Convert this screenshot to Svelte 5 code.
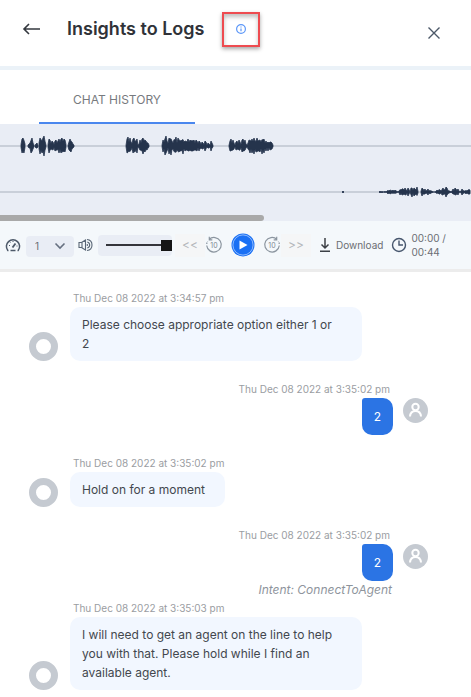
<script>
  const messages = [
    { from: 'bot', time: 'Thu Dec 08 2022 at 3:34:57 pm', text: 'Please choose appropriate option either 1 or 2' },
    { from: 'user', time: 'Thu Dec 08 2022 at 3:35:02 pm', text: '2' },
    { from: 'bot', time: 'Thu Dec 08 2022 at 3:35:02 pm', text: 'Hold on for a moment' },
    { from: 'user', time: 'Thu Dec 08 2022 at 3:35:02 pm', text: '2', intent: 'Intent: ConnectToAgent' },
    {
      from: 'bot',
      time: 'Thu Dec 08 2022 at 3:35:03 pm',
      text: 'I will need to get an agent on the line to help you with that. Please hold while I find an available agent.'
    }
  ];

  // Bursts of speech: start position and amplitude per pixel.
  const customer = [
    [21, [2, 7, 8, 7, 2]],
    [28, [1, 2, 3, 7, 8, 3, 1]],
    [35, [1, 2, 3, 1]],
    [39, [4, 8, 6, 7, 8, 10, 6, 1]],
    [48, [2, 7, 6, 3, 5, 4, 2, 5, 6, 4, 5, 7, 5, 7, 8, 6, 7, 6, 2]],
    [68, [1, 4, 7, 6, 4, 2, 1]],
    [126, [1, 7, 9, 5, 8, 4, 3, 7, 8, 6, 5, 7, 1, 2, 6, 4, 7, 8, 7, 6, 5, 4, 3, 1]],
    [162, [1, 6, 4, 9, 10, 5, 3, 8, 7, 9, 5, 3, 8, 6, 9, 4, 8, 6, 7, 5, 6, 8, 4, 5, 6, 4, 7, 5, 6, 5, 7, 5, 6, 4, 6, 5, 3, 5, 4, 2, 4, 3, 2, 5, 4, 1, 3, 2, 1, 5, 3, 1]],
    [229, [1, 5, 7, 4, 6, 3, 1, 4, 5, 3, 6, 4, 2, 6, 7, 5, 6, 2, 1, 3, 6, 7, 5, 7, 6, 8, 5, 6, 8, 5, 7, 6, 4, 8, 6, 7, 4, 5, 3, 5, 3, 4, 5, 3, 1]]
  ];
  const agent = [
    [342, [0, 1, 0]],
    [379, [0, 1, 0, 1, 0, 0, 1, 0, 1, 2, 1, 2, 2, 1, 2, 1, 2, 1, 1, 0, 1, 3, 2, 3, 4, 2, 4, 3, 1, 4, 3, 0, 4, 5, 2, 4, 4, 2, 5, 1]],
    [421, [1, 4, 3, 2, 3, 1, 2, 3, 1, 2, 1, 1, 0, 0, 0, 1, 2, 1, 3, 2, 1, 3, 4, 2, 3, 5, 4, 2, 1, 1, 0, 1, 3, 2, 4, 3, 2, 3, 1, 0, 1, 3, 2, 1, 1, 2, 1, 2, 3, 2]]
  ];

  function shape([start, amps], mid) {
    const top = amps.map((a, i) => `${start + i},${mid - a * (i % 3 ? 1 : 0.8)}`);
    const bottom = amps.map((a, i) => `${start + i},${mid + a * (i % 2 ? 1 : 0.7)}`).reverse();
    return [...top, ...bottom].join(' ');
  }

  let speed = $state('1');
  let volume = $state(100);
</script>

<main>
  <header>
    <button class="plain back" aria-label="Back">
      <svg width="20" height="16" viewBox="0 0 20 16" fill="none" stroke="#34383f" stroke-width="1.6">
        <path d="M19 8H3M8 3 3 8l5 5" />
      </svg>
    </button>
    <h1>Insights to Logs</h1>
    <button class="info" aria-label="Information">
      <svg width="12" height="12" viewBox="0 0 12 12" fill="none" stroke="#5c97f8" stroke-width="1.2">
        <circle cx="6" cy="6" r="4.4" />
        <path d="M6 5.5v2.8M6 3.4v1.2" />
      </svg>
    </button>
    <button class="plain close" aria-label="Close">
      <svg width="14" height="14" viewBox="0 0 14 14" fill="none" stroke="#4c5868" stroke-width="1.4">
        <path d="m1.5 1.5 11 11M12.5 1.5l-11 11" />
      </svg>
    </button>
  </header>

  <nav>
    <button class="tab">CHAT HISTORY</button>
  </nav>

  <section class="wave" aria-label="Recording">
    <svg width="100%" height="91" fill="#25344c">
      <line x1="0" x2="100%" y1="22" y2="22" stroke="#c9cfd9" stroke-width="2" />
      <line x1="0" x2="100%" y1="68" y2="68" stroke="#c9cfd9" stroke-width="2" />
      {#each customer as burst}<polygon points={shape(burst, 22)} stroke="#25344c" stroke-width="0.8" />{/each}
      {#each agent as burst}<polygon points={shape(burst, 68)} stroke="#25344c" stroke-width="0.8" />{/each}
    </svg>
    <div class="scroll"></div>
  </section>

  <section class="controls" aria-label="Player">
    <svg class="gauge" width="16" height="16" viewBox="0 0 16 16" fill="none" stroke="#4d5969" stroke-width="1.5">
      <path d="M3.5 13.5H2.8A6.600 6.600 0 1 1 13.2 13.5H12.5M5.5 13.5h5" />
      <path d="m7.5 10.5 3-4" stroke-width="1.8" />
      <path d="M4 8.5h1M5.2 5.4l.6.6M8 4v1M11.5 9h1" stroke-width="1" />
    </svg>
    <span class="speed">
      <select bind:value={speed} aria-label="Playback speed">
        <option>1</option>
        <option>2</option>
      </select>
      <svg width="12" height="8" viewBox="0 0 12 8" fill="none" stroke="#667080" stroke-width="1.6">
        <path d="m1.5 1.5 4.5 4.5 4.5-4.5" />
      </svg>
    </span>
    <svg class="speaker" width="15" height="14" viewBox="0 0 15 14" fill="none" stroke="#596676" stroke-width="1.1">
      <path d="M1 4.500h2.500L7.500 2v10L3.500 9.500H1zM4 4.500v5" />
      <path d="M9 1.500c3 .3 5 2.500 5 5.500s-2 5.200-5 5.500M9.300 4c1.500.4 2.400 1.500 2.400 3s-.9 2.600-2.400 3M9.300 6v2" />
    </svg>
    <span class="volume"><input type="range" min="0" max="100" bind:value={volume} aria-label="Volume" /></span>
    <button class="skip">&lt;&lt;</button>
    <button class="plain" aria-label="Back 10 seconds">
      <svg width="18" height="18" viewBox="0 0 18 18" fill="none" stroke="#8b959f" stroke-width="1.2">
        <path d="M4 3.400A7.300 7.300 0 1 1 1.700 9.500M4.300 .8v3h3" />
        <path d="M1.700 8q.2-1.500 1-2.700" stroke-dasharray="1.5 1" />
        <text x="9" y="11.5">10</text>
      </svg>
    </button>
    <button class="plain play" aria-label="Play">
      <svg width="24" height="24" viewBox="0 0 24 24">
        <circle cx="12" cy="12" r="11.5" fill="#1a70f4" />
        <circle cx="12" cy="12" r="10.1" fill="none" stroke="#9bc3ff" stroke-width=".9" />
        <path d="M8.500 7.500v9l8-4.500z" fill="#fff" />
      </svg>
    </button>
    <button class="plain" aria-label="Forward 10 seconds">
      <svg width="18" height="18" viewBox="0 0 18 18" fill="none" stroke="#8b959f" stroke-width="1.2">
        <path d="M14 3.400A7.300 7.300 0 1 0 16.300 9.500M13.700 .8v3h-3" />
        <path d="M16.300 8q-.2-1.500-1-2.700" stroke-dasharray="1.5 1" />
        <text x="9" y="11.5">10</text>
      </svg>
    </button>
    <button class="skip">&gt;&gt;</button>
    <button class="plain download">
      <svg width="12" height="16" viewBox="0 0 12 16" fill="none" stroke="#3c4046" stroke-width="1.5">
        <path d="M6 1v10M2.500 7.500 6 11l3.500-3.500M1 14.300h10" />
      </svg>
      Download
    </button>
    <svg class="clock" width="16" height="16" viewBox="0 0 16 16" fill="none" stroke="#46566d" stroke-width="1.4">
      <circle cx="8" cy="8" r="6.5" />
      <path d="M8 3.500V8h4" />
    </svg>
    <span class="elapsed">00:00 / 00:44</span>
  </section>

  <ol>
    {#each messages as m}
      <li class={m.from} class:tagged={m.intent}>
        <time>{m.time}</time>
        <div class="row">
          {#if m.from === 'bot'}<span class="ring"></span>{/if}
          <p>{m.text}</p>
          {#if m.from === 'user'}
            <svg width="25" height="25" viewBox="0 0 25 25" fill="none" stroke="#fff" stroke-width="2">
              <circle cx="12.5" cy="12.5" r="12.5" fill="#c5cad1" stroke="none" />
              <circle cx="12.5" cy="9" r="3.2" />
              <path d="M7 18.500c.3-3.500 2.300-5.500 5.500-5.500s5.200 2 5.500 5.500" />
            </svg>
          {/if}
        </div>
        {#if m.intent}<em>{m.intent}</em>{/if}
      </li>
    {/each}
  </ol>
</main>

<style>
  :global(body) {
    background: #fff;
  }
  main {
    font-family: Inter, 'Liberation Sans', sans-serif;
    color: #43474e;
  }
  button,
  select {
    font: inherit;
    color: inherit;
    border: 0;
    padding: 0;
    margin: 0;
  }
  svg {
    display: block;
    flex: none;
  }
  .plain {
    display: flex;
    align-items: center;
    background: none;
  }
  header {
    display: flex;
    align-items: center;
    box-sizing: border-box;
    height: 70px;
    padding: 0 30px 8px 21px;
    border-bottom: 4px solid #ebf2f8;
  }
  h1 {
    margin: 0 18px 0 26px;
    font-size: 18px;
    line-height: 24px;
    font-weight: 600;
    color: #303238;
    white-space: nowrap;
  }
  .info {
    display: flex;
    align-items: center;
    justify-content: center;
    width: 38px;
    height: 35px;
    background: #fff;
    border: 2px solid #ee4b50;
    box-shadow: 0 2px 4px rgb(0 0 0 / 35%), inset 0 3px 4px rgb(0 0 0 / 25%);
  }
  .close {
    margin: 8px 0 0 auto;
  }
  nav {
    padding-left: 39px;
  }
  .tab {
    width: 156px;
    height: 54px;
    padding-top: 6px;
    background: none;
    border-bottom: 2px solid #4a87ee;
    font-size: 12px;
    color: #777a7e;
  }
  .wave {
    background: #e9edf5;
  }
  .scroll {
    width: 56%;
    height: 6px;
    border-radius: 0 3px 3px 0;
    background: #a9a9a9;
  }
  .controls {
    display: flex;
    align-items: center;
    box-sizing: border-box;
    height: 51px;
    padding: 0 20px 0 5px;
    background: #f4f8fb;
    border-bottom: 3px solid #ececec;
    font-size: 10px;
    line-height: 14px;
    color: #6b6e73;
  }
  .speed {
    display: grid;
    align-items: center;
    width: 48px;
    height: 21px;
    margin: 2px 4px 0 5px;
  }
  .speed > * {
    grid-area: 1 / 1;
  }
  .speed svg {
    justify-self: end;
    margin-right: 8px;
    pointer-events: none;
  }
  select {
    appearance: none;
    width: 100%;
    height: 100%;
    padding-left: 9px;
    border-radius: 4px;
    background: #e9edf5;
  }
  .volume {
    display: flex;
    align-items: center;
    width: 66px;
    height: 21px;
    padding-left: 8px;
    margin: 0 3px 0 5px;
    border-radius: 4px;
    background: #e9edf5;
  }
  input {
    appearance: none;
    width: 100%;
    height: 12px;
    margin: 0;
    background: linear-gradient(#34353b, #34353b) center / 100% 2px no-repeat;
  }
  input::-webkit-slider-thumb {
    appearance: none;
    width: 11px;
    height: 11px;
    background: #151515;
  }
  .skip {
    width: 30px;
    height: 23px;
    flex: none;
    background: #f5f6f7;
    font-size: 12px;
    color: #b4b7bb;
  }
  .controls text {
    font-size: 7px;
    text-anchor: middle;
    fill: #7d8792;
    stroke: none;
  }
  .play {
    margin: 0 8px;
  }
  .download {
    gap: 5px;
    margin: 0 8px;
  }
  .elapsed {
    width: 36px;
    margin-left: 4px;
  }
  ol {
    list-style: none;
    margin: 0;
    padding: 17px 0 6px 29px;
  }
  li {
    display: flex;
    flex-direction: column;
    margin-bottom: 19px;
  }
  li:last-child,
  .tagged {
    margin-bottom: 0;
  }
  time {
    margin-left: 44px;
    font-size: 10px;
    line-height: 18px;
    color: #9a9da2;
  }
  .row {
    display: flex;
    align-items: flex-end;
    gap: 12px;
  }
  .ring {
    flex: none;
    box-sizing: border-box;
    width: 29px;
    height: 29px;
    border: 7px solid #c5cad1;
    border-radius: 50%;
  }
  p {
    box-sizing: border-box;
    margin: 0;
    padding: 8px 20px 8px 12px;
    max-width: 292px;
    border-radius: 10px;
    background: #f2f7ff;
    font-size: 12px;
    line-height: 19px;
  }
  .user {
    align-items: flex-end;
    padding-right: 43px;
  }
  .user time {
    margin: 0 38px 0 0;
  }
  .user .row {
    align-items: flex-start;
    gap: 10px;
  }
  .user p {
    padding: 9px 12px;
    border-radius: 3px 10px 10px 10px;
    background: #2b74e4;
    color: #fff;
  }
  em {
    margin-right: 36px;
    font-size: 12px;
    line-height: 18px;
    color: #8e949c;
  }
</style>
